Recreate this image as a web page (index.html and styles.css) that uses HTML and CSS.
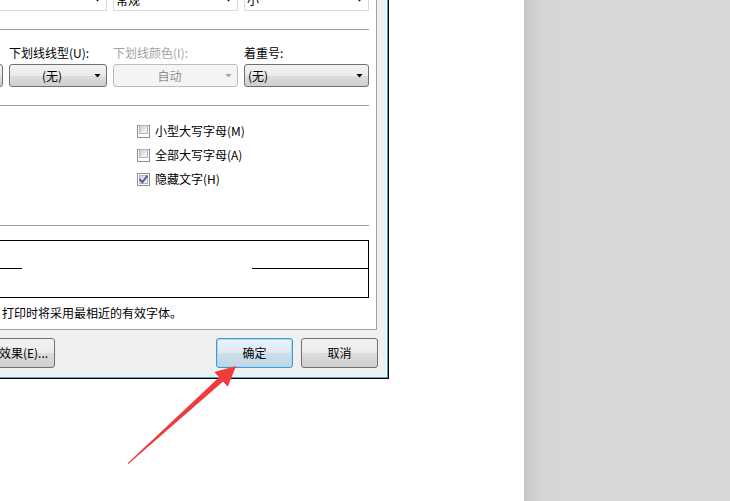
FILE: index.html
```html
<!DOCTYPE html>
<html lang="zh-CN">
<head>
<meta charset="utf-8">
<title>字体</title>
<link rel="stylesheet" href="styles.css">
</head>
<body>
<div class="screen">
  <div class="doc">
    <div class="dialog">
      <div class="panel">
        <div class="grid toprow">
          <div class="field wide"><span class="ftext"></span><i class="arrow"></i></div>
          <div class="field"><span class="ftext">常规</span><i class="arrow"></i></div>
          <div class="field"><span class="ftext">小</span><i class="arrow"></i></div>
        </div>
        <div class="sep sep1"></div>
        <div class="grid labels">
          <span></span>
          <span>下划线线型(U):</span>
          <span class="dim">下划线颜色(I):</span>
          <span>着重号:</span>
        </div>
        <div class="grid combos">
          <div class="combo"><span class="ctext"></span><i class="arrow"></i></div>
          <div class="combo center"><span class="ctext">(无)</span><i class="arrow"></i></div>
          <div class="combo center off"><span class="ctext">自动</span><i class="arrow"></i></div>
          <div class="combo"><span class="ctext">(无)</span><i class="arrow"></i></div>
        </div>
        <div class="sep sep2"></div>
        <div class="checks">
          <div class="check"><span class="cb"><span class="cbin"></span></span><span>小型大写字母(M)</span></div>
          <div class="check"><span class="cb"><span class="cbin"></span></span><span>全部大写字母(A)</span></div>
          <div class="check"><span class="cb"><span class="cbin"></span><svg class="tick" width="13" height="13" viewBox="0 0 13 13"><polyline points="2.6,6.2 5.4,9.2 10.4,2.6" fill="none" stroke="#4a5c94" stroke-width="1.9" stroke-linejoin="miter"/></svg></span><span>隐藏文字(H)</span></div>
        </div>
        <div class="sep sep3"></div>
        <div class="preview"><div class="pl"></div><div class="pr"></div></div>
        <div class="note">打印时将采用最相近的有效字体。</div>
      </div>
      <div class="buttons">
        <div class="btn effects">文字效果(E)...</div>
        <div class="btn ok">确定</div>
        <div class="btn cancel">取消</div>
      </div>
    </div>
  </div>
  <div class="desk"></div>
  <svg class="arrowmark" width="730" height="501" viewBox="0 0 730 501">
    <polygon points="236,366 214.4,372 219.1,377.2 127.6,463.2 128.4,464 223.1,381.6 227.8,386.8" fill="#ef3b3b"/>
  </svg>
</div>
</body>
</html>
```

FILE: styles.css
```css
* { box-sizing: border-box; }
html, body { margin: 0; padding: 0; }
body {
  width: 730px;
  height: 501px;
  overflow: hidden;
  font-family: "Noto Sans CJK SC", "Noto Sans", sans-serif;
  font-size: 12px;
  color: #000;
  background: #fff;
}
.screen { display: flex; width: 730px; height: 501px; position: relative; overflow: hidden; }
.doc { width: 524px; flex: none; background: #fff; }
.desk {
  flex: 1;
  background: linear-gradient(to right, #c6c6c6 0px, #cdcdcd 7px, #d5d5d5 18px, #d8d8d8 40px, #d8d8d8 100%);
}
.dialog {
  width: 389px;
  height: 379px;
  background: #f0f0f0;
  border-right: 1px solid #000;
  border-bottom: 1px solid #000;
  box-shadow: inset -1px -1px 0 #44a6dc;
}
.panel {
  width: 377px;
  height: 330px;
  background: #fff;
  border-right: 1px solid #a0a0a0;
  border-bottom: 1px solid #a0a0a0;
  overflow: hidden;
}
.grid {
  display: grid;
  grid-template-columns: 97px 98px 125px 125px;
  column-gap: 6px;
  margin-left: -94px;
}
.field {
  height: 23px;
  margin-top: -12px;
  background: #fff;
  border: 1px solid #d6dbe1;
  display: flex;
  align-items: center;
}
.field.wide { grid-column: 1 / span 2; }
.ftext { flex: 1; padding-left: 2px; line-height: 16px; white-space: nowrap; }
.sep { height: 1px; width: 369px; background: #a0a0a0; }
.sep1 { margin-top: 18px; }
.labels { margin-top: 15px; line-height: 16px; white-space: nowrap; }
.dim { color: #a3a3a3; }
.combos { margin-top: 3px; }
.combo {
  height: 23px;
  border: 1px solid #707070;
  border-radius: 3px;
  background: linear-gradient(#f2f2f2, #ebebeb 50%, #dddddd 50%, #cfcfcf);
  display: flex;
  align-items: center;
}
.ctext { flex: 1; padding-left: 3px; line-height: 16px; white-space: nowrap; }
.combo.center .ctext { text-align: center; padding-left: 0; }
.arrow {
  flex: none;
  display: block;
  width: 7px;
  height: 4px;
  margin-right: 5px;
  background: #000;
  clip-path: polygon(0 0, 100% 0, 50% 100%);
}
.combo.off { border-color: #bdbdbd; background: #f4f4f4; color: #8f8f8f; }
.combo.off .arrow { background: #a6a6a6; }
.sep2 { margin-top: 18px; }
.checks {
  margin-top: 19px;
  padding-left: 137px;
  display: flex;
  flex-direction: column;
  row-gap: 11px;
}
.check {
  display: flex;
  align-items: center;
  height: 13px;
  column-gap: 5px;
  white-space: nowrap;
  line-height: 16px;
}
.check span:last-child { margin-top: -2px; }
.cb {
  position: relative;
  flex: none;
  width: 13px;
  height: 13px;
  border: 1px solid #8e8f8f;
  padding: 1px;
  background: #fff;
}
.cbin {
  display: block;
  width: 9px;
  height: 9px;
  border: 1px solid #b0b4b9;
  background: linear-gradient(135deg, #cdd0d4, #eeeeee 70%, #f7f7f7);
}
.tick { position: absolute; left: -1px; top: -1px; }
.sep3 { margin-top: 39px; }
.preview {
  margin-top: 14px;
  margin-left: -100px;
  width: 469px;
  height: 58px;
  border: 1px solid #000;
  display: flex;
  align-items: flex-start;
  padding-top: 27px;
}
.pl { width: 121px; height: 1px; background: #000; flex: none; }
.pr { flex: 1; height: 1px; background: #000; margin-left: 230px; }
.note { margin-top: 7px; padding-left: 2px; line-height: 16px; white-space: nowrap; }
.buttons { display: flex; margin-top: 8px; width: 378px; }
.btn {
  flex: none;
  height: 30px;
  border: 1px solid #707070;
  border-radius: 3px;
  background: linear-gradient(#f2f2f2, #ebebeb 50%, #dddddd 50%, #cfcfcf);
  display: flex;
  align-items: center;
  justify-content: center;
  line-height: 16px;
  white-space: nowrap;
}
.btn.effects { width: 79px; margin-left: -24px; padding-right: 8px; }
.btn.ok {
  width: 77px;
  margin-left: auto;
  border-color: #3c9ad6;
  box-shadow: inset 0 0 0 1px #a9d8f2;
  background: linear-gradient(#eaf3f9, #dde9f2 50%, #cde0eb 50%, #bed6e4);
}
.btn.cancel { width: 77px; margin-left: 8px; }
.arrowmark { position: absolute; left: 0; top: 0; pointer-events: none; }
```
